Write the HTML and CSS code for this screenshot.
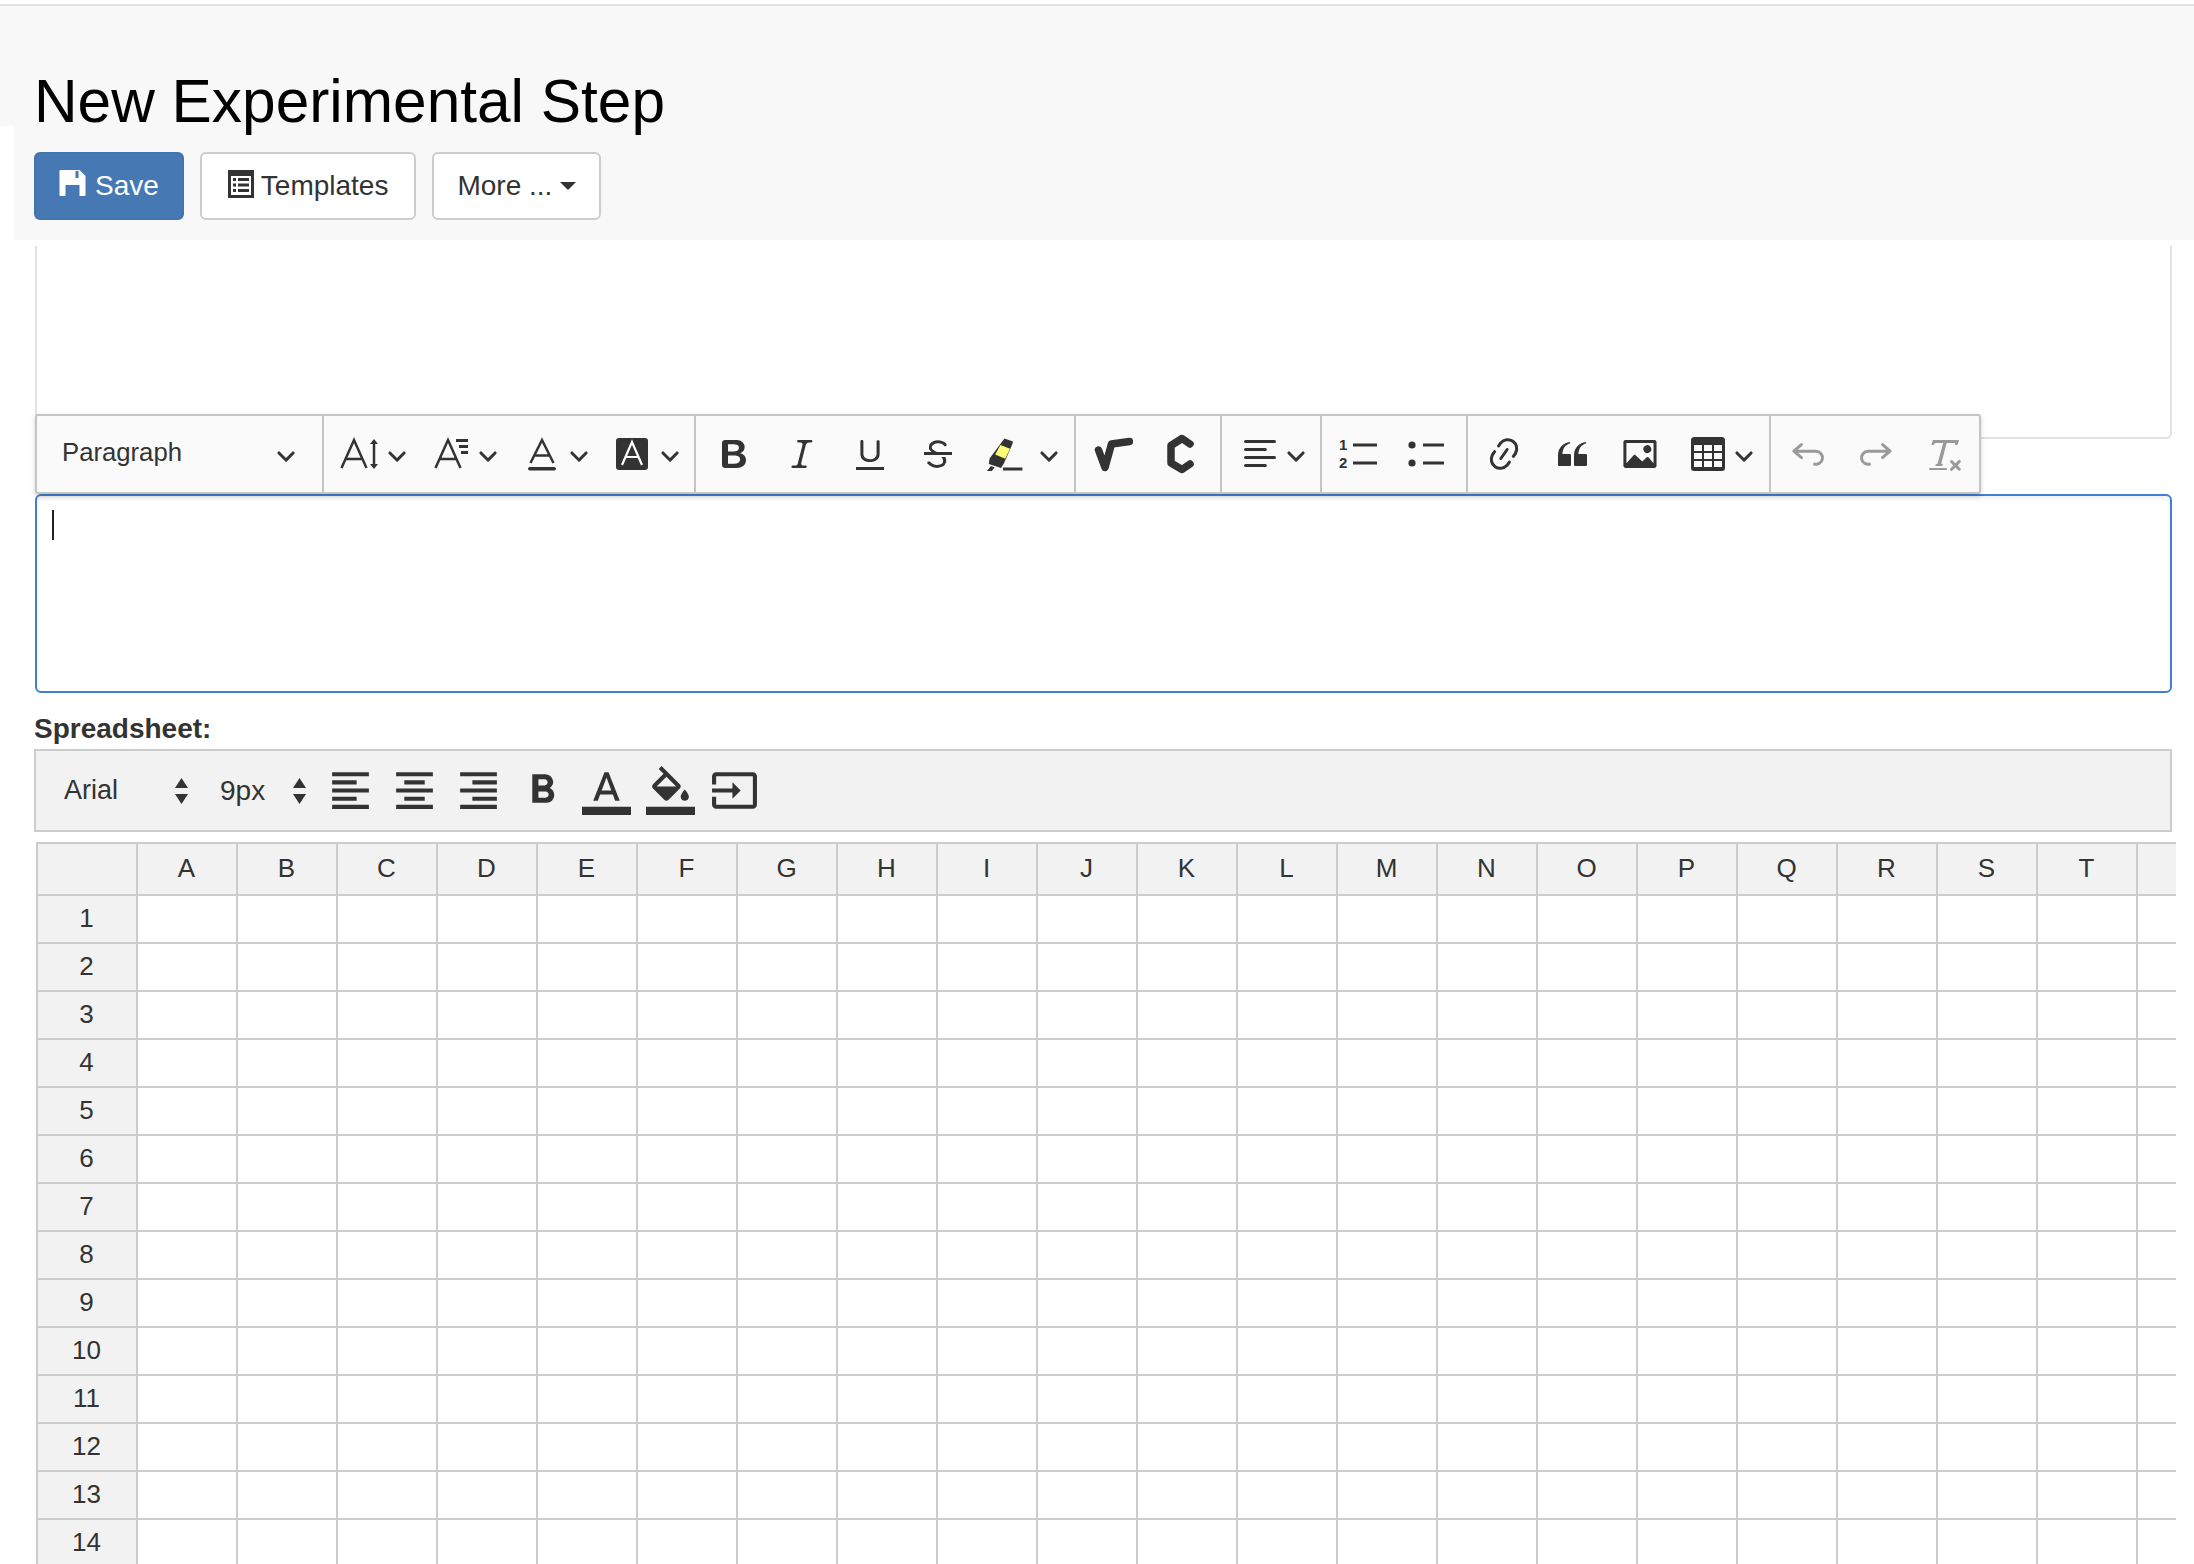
FILE: index.html
```html
<!DOCTYPE html>
<html lang="en">
<head>
<meta charset="utf-8">
<title>New Experimental Step</title>
<link rel="stylesheet" href="styles.css">
</head>
<body>
<svg class="defs" width="0" height="0" aria-hidden="true">
  <symbol id="chev" viewBox="0 0 10 10"><path d="M.941 4.523a.75.75 0 1 1 1.06-1.06l3.006 3.005 3.005-3.005a.75.75 0 1 1 1.06 1.06l-3.549 3.55a.75.75 0 0 1-1.168-.136L.941 4.523z"/></symbol>
  <symbol id="updown" viewBox="0 0 13 26"><path d="M6.5 0 13 10H0zM0 16h13L6.5 26z"/></symbol>
</svg>

<header class="page-head">
  <div class="title-bar"><h1 class="title">New Experimental Step</h1></div>
  <div class="actions">
    <button class="btn btn-primary">
      <svg class="btn-icon-save" viewBox="0 0 26 26"><path fill-rule="evenodd" d="M1 0h19l6 6v19a1 1 0 0 1-1 1H1a1 1 0 0 1-1-1V1a1 1 0 0 1 1-1zM6 15v11h14V15zM16 1v7h3V1z"/></svg>
      Save
    </button>
    <button class="btn btn-templates">
      <svg class="btn-icon-list" viewBox="0 0 26 28"><path fill-rule="evenodd" d="M0 0h26v28H0zM3 6v19h20V6zM5 8h3v3H5zM10 8h11v3H10zM5 13.5h3v3H5zM10 13.5h11v3H10zM5 19h3v3H5zM10 19h11v3H10z"/></svg>
      Templates
    </button>
    <button class="btn">More ...<span class="caret-down"></span></button>
  </div>
</header>

<main>
  <div class="prev-card"></div>

  <div class="rt-toolbar">
    <div class="group group-heading">
      <span class="heading-label">Paragraph</span>
      <svg class="chev"><use href="#chev"/></svg>
    </div>

    <div class="group group-font">
      <span class="dd">
        <svg class="ic" viewBox="0 0 40 40"><path class="line" d="M1.5 34 14 6l12.5 28M6 25h16"/><path class="line" d="M34 8v24"/><path d="M34 5l4 5h-8zM34 35l-4-5h8z"/></svg>
        <svg class="chev"><use href="#chev"/></svg>
      </span>
      <span class="dd">
        <svg class="ic" viewBox="0 0 40 40"><path class="line" d="M4.500 34 17 6l12.500 28M9 25h16"/><path d="M25 5h12v3H25zM28 11h9v3h-9zM30 17h7v3h-7z"/></svg>
        <svg class="chev"><use href="#chev"/></svg>
      </span>
      <span class="dd">
        <svg class="ic" viewBox="0 0 40 40"><path class="line" d="M8.500 29 20 6l11.500 23M12 21.500h16"/><rect x="6" y="33" width="28" height="3.500" rx="1.700"/></svg>
        <svg class="chev"><use href="#chev"/></svg>
      </span>
      <span class="dd">
        <svg class="ic" viewBox="0 0 40 40"><rect x="3" y="4" width="32" height="32" rx="3"/><path class="line-white" d="M9 31 19 8l10 23M12.500 23h13"/></svg>
        <svg class="chev"><use href="#chev"/></svg>
      </span>
    </div>

    <div class="group group-basic">
      <svg class="ic" viewBox="0 0 20 20"><path d="M10.187 17H5.773c-.637 0-1.092-.138-1.364-.415-.273-.277-.409-.718-.409-1.323V4.738c0-.617.14-1.062.419-1.332.279-.27.73-.406 1.354-.406h4.680c.690 0 1.288.041 1.793.124.506.083.960.242 1.360.478.341.197.644.447.906.750a3.262 3.262 0 0 1 .808 2.162c0 1.401-.722 2.426-2.167 3.075C15.050 10.175 16 11.315 16 13.010a3.756 3.756 0 0 1-2.296 3.504 6.100 6.100 0 0 1-1.517.377c-.571.073-1.238.110-2 .110zm-.217-6.217H7v4.087h3.069c1.977 0 2.965-.690 2.965-2.072 0-.707-.256-1.220-.768-1.537-.512-.319-1.277-.478-2.296-.478zM7 5.130v3.619h2.606c.729 0 1.292-.067 1.690-.2a1.600 1.600 0 0 0 .910-.765c.165-.267.247-.566.247-.897 0-.707-.260-1.176-.778-1.409-.519-.232-1.310-.348-2.375-.348H7z"/></svg>
      <svg class="ic" viewBox="0 0 20 20"><path d="m9.586 14.633.021.004c-.036.335.095.655.393.962.082.083.173.150.274.201h1.474a.6.600 0 1 1 0 1.200H5.304a.6.600 0 0 1 0-1.200h1.150c.474-.07.809-.182 1.005-.334.157-.122.291-.32.404-.597l2.416-9.550a1.053 1.053 0 0 0-.281-.823 1.120 1.120 0 0 0-.442-.296H8.150a.6.600 0 0 1 0-1.200h6.443a.6.600 0 1 1 0 1.200h-1.195c-.376.056-.650.155-.823.296-.215.175-.423.439-.623.790l-2.366 9.347z"/></svg>
      <svg class="ic" viewBox="0 0 20 20"><path d="M3 18v-1.500h14V18zm2.200-8V3.600c0-.4.4-.6.800-.6.300 0 .7.200.7.600v6.200c0 2 1.300 2.800 3.200 2.800 1.900 0 3.400-.9 3.400-2.900V3.600c0-.3.400-.5.800-.5.300 0 .7.200.7.500V10c0 2.700-2.200 4-4.900 4-2.600 0-4.700-1.200-4.700-4z"/></svg>
      <svg class="ic" viewBox="0 0 20 20"><path d="M7 16.400c-.8-.4-1.500-.9-2.200-1.500a.6.600 0 0 1-.2-.5l.3-.6h1c1 1.200 2.100 1.700 3.700 1.700 1 0 1.800-.3 2.300-.6.600-.4.600-1.200.6-1.300.2-1.200-.9-2.100-.9-2.100h2.100c.3.700.4 1.200.4 1.700v.8l-.6 1.200c-.6.800-1.100 1-1.600 1.200a6 6 0 0 1-2.400.6c-1 0-1.800-.3-2.500-.6zM6.800 9 6 8.300c-.4-.5-.5-.8-.5-1.600 0-.7.100-1.300.5-1.800.4-.6 1-1 1.600-1.300a6.300 6.300 0 0 1 4.700 0 4 4 0 0 1 1.700 1l.3.7c0 .1.200.4-.2.700-.4.200-.9.100-1 0a3 3 0 0 0-1.200-1c-.4-.2-1-.3-2-.4-.7 0-1.400.2-2 .6-.8.600-1 .8-1 1.500 0 .8.500 1 1.200 1.500.6.400 1.100.7 1.900 1H6.800zM3 10.500V9h14v1.500z"/></svg>
      <span class="dd dd-wide">
        <svg class="ic" viewBox="0 0 20 20"><path d="M9.200 2.200 13.500 3.800 13.200 5 9 14.600 7.500 17 4.500 16 1.400 15 1.800 12.200z"/><path fill="#fdfd77" d="M7.200 5.500 12 7.400 9.600 12.400 4.600 10.300z"/><path d="M.5 18.500 2.500 16l1.800.8-1.400 1.700zM8.500 16.800h9.700v1.500H8.500z"/></svg>
        <svg class="chev"><use href="#chev"/></svg>
      </span>
    </div>

    <div class="group group-math">
      <svg class="ic" viewBox="0 0 40 40"><path class="thick" d="M5.500 16 12 33.500 18.500 10 36.500 7.500"/></svg>
      <svg class="ic" viewBox="0 0 40 40"><path class="thick" d="M29 10 21 4.500 10 11.500v17.500L21 35.500 29 30"/></svg>
    </div>

    <div class="group group-align">
      <span class="dd">
        <svg class="ic" viewBox="0 0 20 20"><path d="M2 3.750c0 .414.336.750.750.750h14.500a.750.750 0 1 0 0-1.500H2.750a.750.750 0 0 0-.750.750zm0 8c0 .414.336.750.750.750h14.500a.750.750 0 1 0 0-1.500H2.750a.750.750 0 0 0-.750.750zm0 4c0 .414.336.750.750.750h9.929a.750.750 0 1 0 0-1.500H2.750a.750.750 0 0 0-.750.750zm0-8c0 .414.336.750.750.750h9.929a.750.750 0 1 0 0-1.500H2.750a.750.750 0 0 0-.750.750z"/></svg>
        <svg class="chev"><use href="#chev"/></svg>
      </span>
    </div>

    <div class="group group-list">
      <svg class="ic" viewBox="0 0 20 20"><text class="num" x="1" y="8">1</text><text class="num" x="1" y="17.200">2</text><path d="M8 4.800h12v1.500H8zM8 13.800h12v1.500H8z"/></svg>
      <svg class="ic" viewBox="0 0 20 20"><circle cx="3.500" cy="5.500" r="1.800"/><circle cx="3.500" cy="14.500" r="1.800"/><path d="M9 4.800h10.500v1.500H9zM9 13.800h10.500v1.500H9z"/></svg>
    </div>

    <div class="group group-insert">
      <svg class="ic" viewBox="0 0 20 20"><path d="m11.077 15 .991-1.416a.750.750 0 1 1 1.229.860l-1.148 1.640a.748.748 0 0 1-.217.206 5.251 5.251 0 0 1-8.503-5.955.741.741 0 0 1 .120-.274l1.147-1.639a.750.750 0 1 1 1.228.860L4.933 10.700l.006.003a3.750 3.750 0 0 0 6.132 4.294l.006.003zm5.494-5.335a.748.748 0 0 1-.120.274l-1.147 1.639a.750.750 0 1 1-1.228-.860l.860-1.230a3.750 3.750 0 0 0-6.144-4.301l-.860 1.229a.750.750 0 0 1-1.229-.860l1.148-1.640a.748.748 0 0 1 .217-.206 5.251 5.251 0 0 1 8.503 5.955zm-4.563-2.532a.750.750 0 0 1 .184 1.045l-3.155 4.505a.750.750 0 1 1-1.229-.860l3.155-4.506a.750.750 0 0 1 1.045-.184z"/></svg>
      <svg class="ic" viewBox="0 0 20 20"><path d="M3 10.423a6.500 6.500 0 0 1 6.056-6.408l.038.670C6.448 5.423 5.354 7.663 5.220 10H9c.552 0 .5.432.5.986v4.511c0 .554-.448.503-1 .503h-5c-.552 0-.5-.449-.5-1.003v-4.574zm8 0a6.500 6.500 0 0 1 6.056-6.408l.038.670c-2.646.739-3.740 2.979-3.873 5.315H17c.552 0 .5.432.5.986v4.511c0 .554-.448.503-1 .503h-5c-.552 0-.5-.449-.5-1.003v-4.574z"/></svg>
      <svg class="ic" viewBox="0 0 20 20"><path d="M6.910 10.540c.260-.23.640-.21.880.030l3.360 3.140 2.230-2.060a.640.640 0 0 1 .870 0l2.520 2.970V4.500H3.200v10.120l3.710-4.080zm10.270-7.510c.600 0 1.090.470 1.090 1.050v11.840c0 .590-.490 1.060-1.090 1.060H2.790c-.600 0-1.090-.470-1.090-1.060V4.080c0-.580.490-1.050 1.100-1.050h14.380zm-5.220 5.560a1.960 1.960 0 1 1 3.400-1.960 1.960 1.960 0 0 1-3.400 1.960z"/></svg>
      <span class="dd dd-tight">
        <svg class="ic" viewBox="0 0 20 20"><path fill-rule="evenodd" d="M3 1.500h14c.800 0 1.500.7 1.500 1.500v14a1.500 1.500 0 0 1-1.500 1.500H3A1.500 1.500 0 0 1 1.500 17V3c0-.8.7-1.500 1.500-1.500zM3 5.500v3h4v-3zM8 5.500v3h4v-3zM13 5.500v3h4v-3zM3 9.500v3h4v-3zM8 9.500v3h4v-3zM13 9.500v3h4v-3zM3 13.500v3h4v-3zM8 13.500v3h4v-3zM13 13.500v3h4v-3z"/></svg>
        <svg class="chev"><use href="#chev"/></svg>
      </span>
    </div>

    <div class="group group-history">
      <svg class="ic" viewBox="0 0 20 20"><path d="m5.042 9.367 2.189 1.837a.750.750 0 0 1-.965 1.149l-3.788-3.180a.747.747 0 0 1-.210-.284.750.750 0 0 1 .170-.945L6.230 4.762a.750.750 0 1 1 .964 1.150L4.863 7.866h8.917A.750.750 0 0 1 14 7.900a4 4 0 1 1-1.477 7.718l.344-1.489a2.500 2.500 0 1 0 1.094-4.730l.008-.032H5.042z"/></svg>
      <svg class="ic" viewBox="0 0 20 20"><path d="m14.958 9.367-2.189 1.837a.750.750 0 0 0 .965 1.149l3.788-3.180a.747.747 0 0 0 .210-.284.750.750 0 0 0-.170-.945L13.770 4.762a.750.750 0 1 0-.964 1.150l2.331 1.955H6.220A.750.750 0 0 0 6 7.900a4 4 0 1 0 1.477 7.718l-.344-1.489A2.500 2.500 0 1 1 6.039 9.400l-.008-.032h8.927z"/></svg>
      <svg class="ic" viewBox="0 0 20 20"><path d="M8.690 14.915c.053.052.173.083.360.093a.366.366 0 0 1 .345.485l-.003.010a.738.738 0 0 1-.697.497h-2.670a.374.374 0 0 1-.353-.496l.013-.038a.681.681 0 0 1 .644-.458c.197-.012.325-.043.386-.093a.280.280 0 0 0 .072-.110L9.592 4.500H6.269c-.359-.017-.609.013-.750.090-.142.078-.289.265-.442.563-.192.290-.516.464-.864.464H4.170a.430.430 0 0 1-.407-.569L4.460 3h13.080l-.620 2.043a.810.810 0 0 1-.775.574h-.114a.486.486 0 0 1-.486-.486c.001-.284-.054-.464-.167-.54-.112-.076-.367-.106-.766-.091h-3.280l-2.680 10.257c-.006.074.007.127.038.158zM3 17h8a.5.500 0 1 1 0 1H3a.5.500 0 1 1 0-1zm11.299 1.170a.750.750 0 1 1-1.060-1.060l1.414-1.415-1.415-1.414a.750.750 0 0 1 1.060-1.060l1.415 1.414 1.414-1.415a.750.750 0 1 1 1.060 1.060l-1.413 1.415 1.414 1.415a.750.750 0 0 1-1.060 1.060l-1.415-1.414-1.414 1.414z"/></svg>
    </div>
  </div>

  <div class="editor"><span class="text-caret"></span></div>

  <div class="ss-label">Spreadsheet:</div>

  <div class="ss-toolbar">
    <span class="ss-select ss-font">Arial<svg class="updown"><use href="#updown"/></svg></span>
    <span class="ss-select ss-size">9px<svg class="updown"><use href="#updown"/></svg></span>
    <div class="ss-icons">
      <svg class="ss-ic" viewBox="0 0 24 24"><path d="M15 15H3v2h12v-2zm0-8H3v2h12V7zM3 13h18v-2H3v2zm0 8h18v-2H3v2zM3 3v2h18V3H3z"/></svg>
      <svg class="ss-ic" viewBox="0 0 24 24"><path d="M7 15v2h10v-2H7zm-4 6h18v-2H3v2zm0-8h18v-2H3v2zm4-6v2h10V7H7zM3 3v2h18V3H3z"/></svg>
      <svg class="ss-ic" viewBox="0 0 24 24"><path d="M3 21h18v-2H3v2zm6-4h12v-2H9v2zm-6-4h18v-2H3v2zm6-4h12V7H9v2zM3 3v2h18V3H3z"/></svg>
      <svg class="ss-ic" viewBox="0 0 24 24"><path d="M15.600 10.790c.970-.670 1.650-1.770 1.650-2.790 0-2.260-1.750-4-4-4H7v14h7.040c2.090 0 3.710-1.700 3.710-3.790 0-1.520-.860-2.820-2.150-3.420zM10 6.500h3c.830 0 1.500.670 1.500 1.500s-.670 1.500-1.500 1.500h-3v-3zm3.500 9H10v-3h3.500c.830 0 1.500.670 1.500 1.500s-.670 1.500-1.500 1.500z"/></svg>
      <svg class="ss-ic" viewBox="0 0 24 24"><path d="M0 20h24v4H0zM11 3 5.500 17h2.250l1.120-3h6.250l1.120 3h2.250L13 3h-2zm-1.380 9L12 5.670 14.380 12H9.620z"/></svg>
      <svg class="ss-ic" viewBox="0 0 24 24"><path d="M0 20h24v4H0zM16.560 8.940 7.620 0 6.210 1.410l2.380 2.380-5.150 5.150c-.590.590-.590 1.540 0 2.120l5.500 5.500c.290.290.680.440 1.060.440s.770-.150 1.060-.440l5.500-5.500c.590-.580.590-1.530 0-2.120zM5.210 10 10 5.210 14.790 10H5.210zM19 11.500s-2 2.170-2 3.500c0 1.100.900 2 2 2s2-.9 2-2c0-1.330-2-3.500-2-3.500z"/></svg>
      <svg class="ss-ic" viewBox="0 0 24 24"><path d="M21 3.010H3c-1.100 0-2 .9-2 2V9h2V4.990h18v14.030H3V15H1v4.010c0 1.100.9 1.980 2 1.980h18c1.100 0 2-.88 2-1.980v-14c0-1.110-.9-2-2-2zM11 16l4-4-4-4v3H1v2h10v3z"/></svg>
    </div>
  </div>

  <div class="sheet">
    <table class="grid">
      <thead>
        <tr><th></th><th>A</th><th>B</th><th>C</th><th>D</th><th>E</th><th>F</th><th>G</th><th>H</th><th>I</th><th>J</th><th>K</th><th>L</th><th>M</th><th>N</th><th>O</th><th>P</th><th>Q</th><th>R</th><th>S</th><th>T</th><th></th></tr>
      </thead>
      <tbody>
        <tr><th>1</th><td></td><td></td><td></td><td></td><td></td><td></td><td></td><td></td><td></td><td></td><td></td><td></td><td></td><td></td><td></td><td></td><td></td><td></td><td></td><td></td><td></td></tr>
        <tr><th>2</th><td></td><td></td><td></td><td></td><td></td><td></td><td></td><td></td><td></td><td></td><td></td><td></td><td></td><td></td><td></td><td></td><td></td><td></td><td></td><td></td><td></td></tr>
        <tr><th>3</th><td></td><td></td><td></td><td></td><td></td><td></td><td></td><td></td><td></td><td></td><td></td><td></td><td></td><td></td><td></td><td></td><td></td><td></td><td></td><td></td><td></td></tr>
        <tr><th>4</th><td></td><td></td><td></td><td></td><td></td><td></td><td></td><td></td><td></td><td></td><td></td><td></td><td></td><td></td><td></td><td></td><td></td><td></td><td></td><td></td><td></td></tr>
        <tr><th>5</th><td></td><td></td><td></td><td></td><td></td><td></td><td></td><td></td><td></td><td></td><td></td><td></td><td></td><td></td><td></td><td></td><td></td><td></td><td></td><td></td><td></td></tr>
        <tr><th>6</th><td></td><td></td><td></td><td></td><td></td><td></td><td></td><td></td><td></td><td></td><td></td><td></td><td></td><td></td><td></td><td></td><td></td><td></td><td></td><td></td><td></td></tr>
        <tr><th>7</th><td></td><td></td><td></td><td></td><td></td><td></td><td></td><td></td><td></td><td></td><td></td><td></td><td></td><td></td><td></td><td></td><td></td><td></td><td></td><td></td><td></td></tr>
        <tr><th>8</th><td></td><td></td><td></td><td></td><td></td><td></td><td></td><td></td><td></td><td></td><td></td><td></td><td></td><td></td><td></td><td></td><td></td><td></td><td></td><td></td><td></td></tr>
        <tr><th>9</th><td></td><td></td><td></td><td></td><td></td><td></td><td></td><td></td><td></td><td></td><td></td><td></td><td></td><td></td><td></td><td></td><td></td><td></td><td></td><td></td><td></td></tr>
        <tr><th>10</th><td></td><td></td><td></td><td></td><td></td><td></td><td></td><td></td><td></td><td></td><td></td><td></td><td></td><td></td><td></td><td></td><td></td><td></td><td></td><td></td><td></td></tr>
        <tr><th>11</th><td></td><td></td><td></td><td></td><td></td><td></td><td></td><td></td><td></td><td></td><td></td><td></td><td></td><td></td><td></td><td></td><td></td><td></td><td></td><td></td><td></td></tr>
        <tr><th>12</th><td></td><td></td><td></td><td></td><td></td><td></td><td></td><td></td><td></td><td></td><td></td><td></td><td></td><td></td><td></td><td></td><td></td><td></td><td></td><td></td><td></td></tr>
        <tr><th>13</th><td></td><td></td><td></td><td></td><td></td><td></td><td></td><td></td><td></td><td></td><td></td><td></td><td></td><td></td><td></td><td></td><td></td><td></td><td></td><td></td><td></td></tr>
        <tr><th>14</th><td></td><td></td><td></td><td></td><td></td><td></td><td></td><td></td><td></td><td></td><td></td><td></td><td></td><td></td><td></td><td></td><td></td><td></td><td></td><td></td><td></td></tr>
      </tbody>
    </table>
  </div>
</main>
</body>
</html>
```

FILE: styles.css
```css
* { box-sizing: border-box; }
html, body { height: 100%; overflow: hidden; }
body {
  margin: 0;
  background: #fff;
  color: #333;
  font-family: "Liberation Sans", Arial, sans-serif;
  font-size: 27px;
}
.defs { position: absolute; }

/* page header */
.page-head { padding-top: 4px; }
.title-bar {
  height: 122px;
  padding: 65px 0 0 34px;
  background: #f8f8f8;
  border-top: 2px solid #e2e2e2;
}
.title {
  margin: 0;
  font-size: 60.400px;
  font-weight: 400;
  line-height: 60px;
  color: #000;
}
.actions {
  display: flex;
  gap: 16px;
  height: 114px;
  margin-left: 14px;
  padding: 26px 0 0 20px;
  background: #f8f8f8;
}
.btn {
  display: inline-flex;
  align-items: center;
  height: 68px;
  padding: 0 23px;
  gap: 7px;
  border: 2px solid #ccc;
  border-radius: 6px;
  background: #fff;
  color: #333;
  font: inherit;
  font-size: 28px;
}
.btn-primary {
  gap: 9px;
  border-color: #4274ad;
  background: #4679b3;
  color: #fff;
}
.btn-templates { padding: 0 26px; }
.btn-icon-save { width: 27px; height: 26px; margin-top: -6px; fill: #fff; }
.btn-icon-list { width: 26px; height: 28px; margin-top: -4px; fill: #333; }
.caret-down {
  width: 0;
  height: 0;
  margin-left: 1px;
  border-top: 8px solid #333;
  border-left: 8px solid transparent;
  border-right: 8px solid transparent;
}

/* previous (hidden behind header) editor box */
.prev-card {
  width: 2137px;
  height: 193px;
  margin: 6px 0 0 35px;
  border: 2px solid #e2e2e2;
  border-top: 0;
  border-radius: 0 0 6px 6px;
}

/* rich text toolbar */
.rt-toolbar {
  position: relative;
  z-index: 1;
  display: flex;
  width: 1946px;
  height: 80px;
  margin: -25px 0 0 35px;
  background: #fafafa;
  border: 2px solid #c4c4c4;
  border-radius: 3px;
  box-shadow: 0 2px 5px rgba(0, 0, 0, .18);
}
.group {
  display: flex;
  align-items: center;
  gap: 28px;
  border-right: 2px solid #c4c4c4;
}
.group-heading { width: 287px; padding: 0 26px 0 25px; justify-content: space-between; }
.heading-label { margin-top: -3px; font-size: 25.700px; }
.group-font { width: 372px; padding-left: 16px; gap: 24px; }
.group-basic { width: 380px; padding-left: 18px; }
.group-math { width: 146px; padding-left: 17px; }
.group-align { width: 100px; padding-left: 18px; }
.group-align .dd { gap: 6px; }
.group-list { width: 146px; padding-left: 15px; }
.group-insert { width: 303px; padding-left: 16px; }
.group-history { flex: 1; padding-left: 17px; border-right: 0; }
.group-history .ic { fill: #9a9a9a; }

.ic { flex: none; width: 40px; height: 40px; fill: #333; }
.chev { flex: none; width: 20px; height: 20px; fill: #333; margin-top: 2px; }
.dd { display: flex; align-items: center; gap: 7px; }
.dd-wide { gap: 13px; }
.dd-tight { gap: 6px; }
.line { fill: none; stroke: #333; stroke-width: 2.500; }
.line-white { fill: none; stroke: #fff; stroke-width: 2.200; }
.thick {
  fill: none;
  stroke: #333;
  stroke-width: 7.500;
  stroke-linecap: round;
  stroke-linejoin: round;
}
.num { font-size: 7.500px; font-weight: 700; fill: #333; font-family: "Liberation Sans", Arial, sans-serif; }

/* focused editor */
.editor {
  height: 199px;
  margin-left: 35px;
  width: 2137px;
  padding: 14px 0 0 15px;
  border: 2px solid #3f80d2;
  border-radius: 6px;
  box-shadow: inset 0 3px 4px rgba(0, 0, 0, .06);
}
.text-caret { display: block; width: 2px; height: 30px; background: #222; }

/* spreadsheet */
.ss-label {
  margin: 16px 0 0 34px;
  font-size: 28px;
  font-weight: 700;
  line-height: 40px;
}
.ss-toolbar {
  display: flex;
  align-items: center;
  width: 2138px;
  height: 83px;
  margin-left: 34px;
  padding-left: 28px;
  background: #f2f2f2;
  border: 2px solid #ccc;
}
.ss-select { display: flex; align-items: center; justify-content: space-between; }
.ss-font { width: 124px; margin-right: 32px; }
.ss-size { width: 86px; margin-right: 20px; font-size: 28px; }
.updown { width: 13px; height: 26px; fill: #333; }
.ss-icons { display: flex; gap: 15px; }
.ss-ic { flex: none; width: 49px; height: 49px; fill: #333; }

.sheet {
  width: 2140px;
  margin: 10px 0 0 36px;
  overflow: hidden;
  border-top: 2px solid #ccc;
  border-left: 2px solid #ccc;
}
.grid {
  width: 2200px;
  table-layout: fixed;
  border-collapse: separate;
  border-spacing: 0;
}
.grid th, .grid td {
  width: 100px;
  height: 48px;
  padding: 0;
  border-right: 2px solid #ccc;
  border-bottom: 2px solid #ccc;
}
.grid th {
  padding: 0 1px 2px 0;
  background: #f2f2f2;
  font-size: 26px;
  font-weight: 400;
  text-align: center;
}
.grid thead th { height: 52px; }
```
